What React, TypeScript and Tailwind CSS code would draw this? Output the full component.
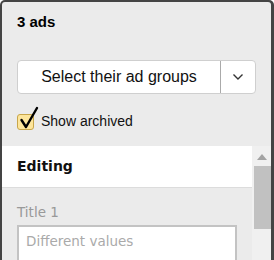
import React from "react";

export default function App() {
  return (
    <div className="w-[274px] h-[260px] overflow-hidden bg-[#444] rounded-t-[5px] pl-[2px] pt-[2px] pr-[3px]">
      <div className="h-full bg-[#ebebeb] flex flex-col rounded-tl-[3px] rounded-tr-[3px]">
        <div className="pl-[15px] pr-[15px]" style={{ fontFamily: '"Liberation Sans", Arial, sans-serif' }}>
          <div className="h-[40px] flex items-center text-[15px] font-bold text-black">3 ads</div>
          <div className="mt-[18px] flex h-[34px] w-[239px] bg-white border border-[#cfcfcf] rounded-[4px]">
            <div className="flex-1 flex items-center justify-center text-[16px] text-[#111] border-r border-[#aaa]">
              Select their ad groups
            </div>
            <div className="w-[34px] flex items-center justify-center">
              <svg width="12" height="8" viewBox="0 0 12 8">
                <path d="M1.5 1.5 L6 6 L10.5 1.5" fill="none" stroke="#333" strokeWidth="1.4" />
              </svg>
            </div>
          </div>
          <div className="mt-[19px] flex items-center h-[17px]">
            <div className="relative w-[17px] h-[16px] bg-[#fde59b] border border-[#c8a64a] rounded-[3px]">
              <svg className="absolute left-[1px] top-[-9px]" width="20" height="24" viewBox="0 0 20 24">
                <path d="M2.5 14 L7 21 L18 2" fill="none" stroke="#000" strokeWidth="2.4" strokeLinecap="round" strokeLinejoin="round" />
              </svg>
            </div>
            <span className="ml-[7px] text-[14px] text-[#111]">Show archived</span>
          </div>
        </div>
        <div className="mt-[16px] flex flex-1 min-h-0" style={{ fontFamily: '"DejaVu Sans", Verdana, sans-serif' }}>
          <div className="w-[250px]">
            <div className="h-[42px] bg-white border-b border-[#dcdcdc] flex items-center pl-[15px] text-[14px] font-bold text-[#111]">
              Editing
            </div>
            <div className="pl-[15px] pt-[16px]">
              <div className="text-[13.5px] text-[#999] leading-[16px]">Title 1</div>
              <div className="mt-[5px] w-[220px] h-[40px] bg-white border-2 border-[#c3c3c3] pl-[7px] pt-[4px] text-[13.5px] text-[#aaa]">
                Different values
              </div>
            </div>
          </div>
          <div className="w-[19px] bg-[#f0f0f0] flex flex-col items-center">
            <svg className="mt-[8px]" width="10" height="6" viewBox="0 0 10 6">
              <path d="M0 6 L5 0 L10 6 Z" fill="#a3a3a3" />
            </svg>
            <div className="mt-[6px] w-[17px] h-[63px] bg-[#c1c1c1] ml-[1px]" />
          </div>
        </div>
      </div>
    </div>
  );
}
